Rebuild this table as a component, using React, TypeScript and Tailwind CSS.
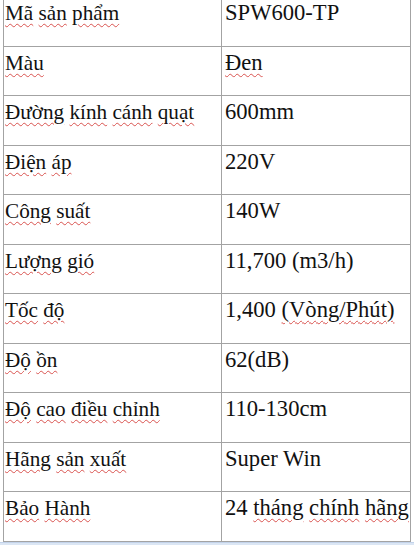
const rows: [string, string][] = [
  ['Mã sản phẩm', 'SPW600-TP'],
  ['Màu', 'Đen'],
  ['Đường kính cánh quạt', '600mm'],
  ['Điện áp', '220V'],
  ['Công suất', '140W'],
  ['Lượng gió', '11,700 (m3/h)'],
  ['Tốc độ', '1,400 (Vòng/Phút)'],
  ['Độ ồn', '62(dB)'],
  ['Độ cao điều chỉnh', '110-130cm'],
  ['Hãng sản xuất', 'Super Win'],
  ['Bảo Hành', '24 tháng chính hãng'],
]

// words the spell checker flags with a red wavy line
const flagged = new Set(['Đen', '(Vòng/Phút)', 'tháng', 'chính', 'hãng'])

function Words({ text, all }: { text: string; all?: boolean }) {
  const parts = text.split(' ')
  return (
    <>
      {parts.map((w, i) => (
        <span key={i}>
          {all || flagged.has(w) ? (
            <span className="underline decoration-wavy decoration-[#d9534f] decoration-[1px] underline-offset-[3px]">{w}</span>
          ) : (
            w
          )}
          {i < parts.length - 1 ? ' ' : ''}
        </span>
      ))}
    </>
  )
}

export default function App() {
  return (
    <div className="w-[414px] h-[545px] bg-white overflow-hidden">
      <div
        className="ml-[3px] w-[408px] -mt-[3px] border-l border-r border-[#a3a3a3] text-[#111] leading-[24px]"
        style={{ fontFamily: '"Liberation Serif", "Times New Roman", serif' }}
      >
        {rows.map(([k, v], i) => (
          <div key={i} className="grid grid-cols-[218px_1fr] h-[49.5px] border-b border-[#a3a3a3]">
            <div className="border-r border-[#a3a3a3] pl-[1px] pt-[4px] whitespace-nowrap text-[21.2px]">
              <Words text={k} all />
            </div>
            <div className="pl-[3px] pt-[4px] whitespace-nowrap text-[22.6px]">
              <Words text={v} />
            </div>
          </div>
        ))}
      </div>
      <div className="h-[4px] bg-[#dbe6f4] border-t border-[#c3d3ea]" />
    </div>
  )
}
